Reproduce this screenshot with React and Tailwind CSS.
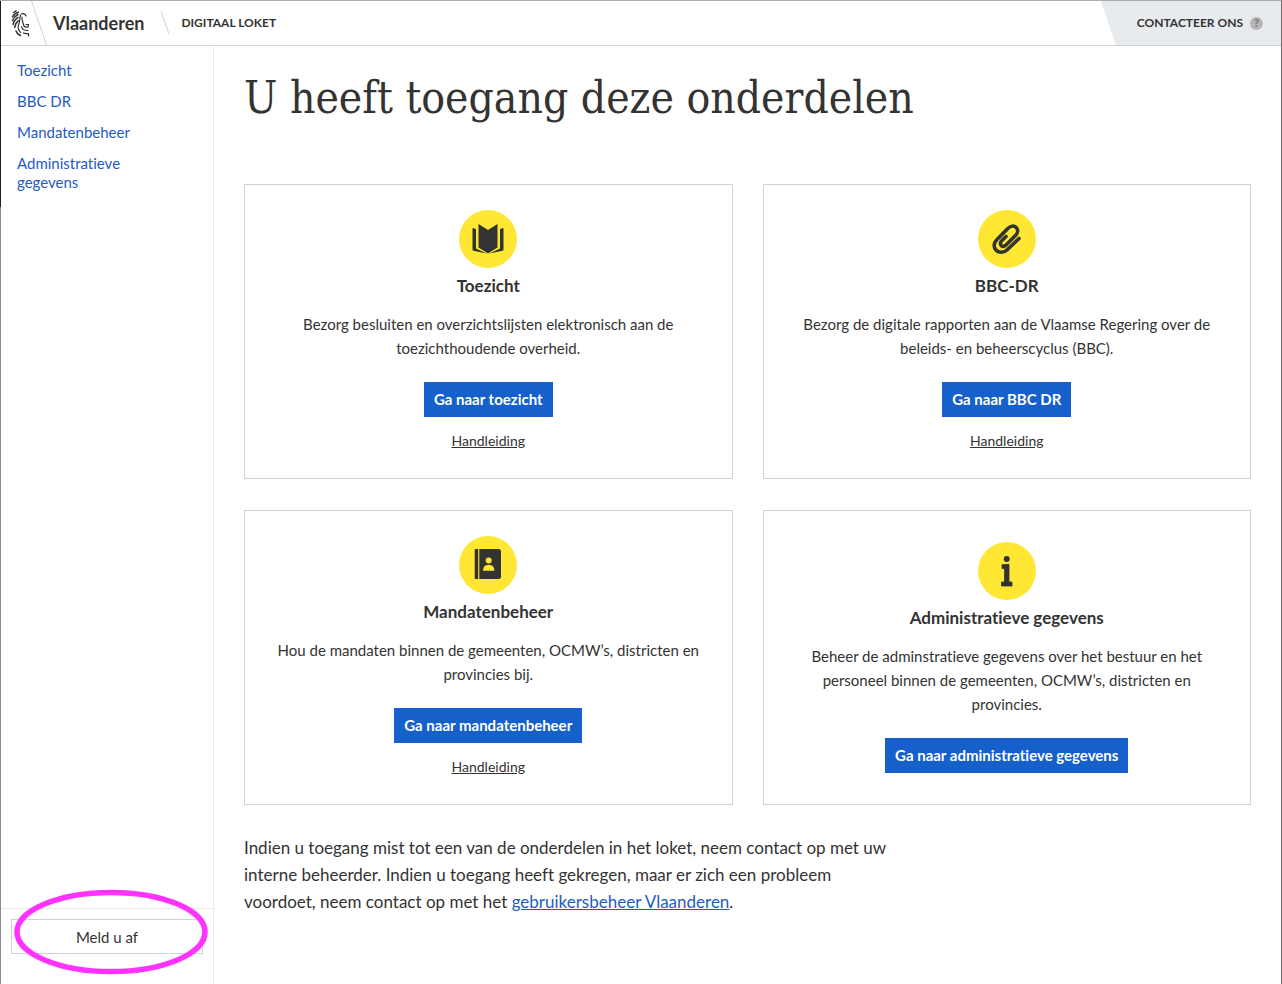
import React from "react";

const modules = [
  {
    title: "Toezicht",
    text: "Bezorg besluiten en overzichtslijsten elektronisch aan de toezichthoudende overheid.",
    action: "Ga naar toezicht",
    manual: true,
    icon: BookIcon,
  },
  {
    title: "BBC-DR",
    text: "Bezorg de digitale rapporten aan de Vlaamse Regering over de beleids- en beheerscyclus (BBC).",
    action: "Ga naar BBC DR",
    manual: true,
    icon: ClipIcon,
  },
  {
    title: "Mandatenbeheer",
    text: "Hou de mandaten binnen de gemeenten, OCMW’s, districten en provincies bij.",
    action: "Ga naar mandatenbeheer",
    manual: true,
    icon: ContactsIcon,
  },
  {
    title: "Administratieve gegevens",
    text: "Beheer de adminstratieve gegevens over het bestuur en het personeel binnen de gemeenten, OCMW’s, districten en provincies.",
    action: "Ga naar administratieve gegevens",
    manual: false,
    icon: InfoIcon,
  },
];

const navigation = ["Toezicht", "BBC DR", "Mandatenbeheer", "Administratieve gegevens"];

function BookIcon() {
  return (
    <svg viewBox="0 0 58 58" className="size-full" fill="#333332" aria-hidden="true">
      <path d="M19.500 14 L29 20 L38.500 14 V37.500 L29 43.500 L19.500 37.500 Z" />
      <path d="M13.500 18 L17 19 V38.500 L27.500 43.500 L14.300 40.800 L13.500 40 Z" />
      <path d="M44.500 18 L41 19 V38.500 L30.500 43.500 L43.700 40.800 L44.500 40 Z" />
    </svg>
  );
}

function ClipIcon() {
  return (
    <svg viewBox="0 0 58 58" className="size-full" fill="none" stroke="#333332" strokeWidth="3.6" strokeLinecap="round" strokeLinejoin="round" aria-hidden="true">
      <path d="M41 28.500 L29.500 39.500 C26 43 21 43.200 18.200 40.300 C15.300 37.400 15.600 33 18.800 29.800 L29.800 18.500 C32.500 15.800 36 15.400 38.200 17.500 C40.400 19.700 40 23 37.500 25.500 L28 35 C26.400 36.600 24.500 36.800 23.200 35.500 C21.900 34.200 22.200 32.300 23.700 30.800 L28 26.500" />
    </svg>
  );
}

function ContactsIcon() {
  return (
    <svg viewBox="0 0 58 58" className="size-full" aria-hidden="true">
      <path d="M16.500 13 H19.200 V43 H16.500 Q15.700 43 15.700 42 V14 Q15.700 13 16.500 13 Z M20.300 13 H39.500 Q42 13 42 15.500 V40.500 Q42 43 39.500 43 H20.300 Z" fill="#333332" />
      <circle cx="29.700" cy="24.500" r="3" fill="#ffe734" />
      <path d="M24 34.700 Q24 28.700 29.700 28.700 Q35.400 28.700 35.400 34.700 Z" fill="#ffe734" />
    </svg>
  );
}

function InfoIcon() {
  return (
    <svg viewBox="0 0 58 58" className="size-full" fill="#333332" aria-hidden="true">
      <circle cx="28.700" cy="17" r="3" />
      <path d="M24 22.800 L31 22.300 V40 H34 V44 H23.500 V40 H26.500 V26.500 H24 Z" stroke="#333332" strokeWidth="0.800" strokeLinejoin="round" />
    </svg>
  );
}

function LionLogo() {
  return (
    <svg viewBox="0 0 20 30" className="h-[30px] w-5" fill="none" stroke="#333332" strokeWidth="1.500" strokeLinecap="round" aria-hidden="true">
      <path d="M2.500 4.500 L5 2.800 M1.500 9 C2.500 7 4 5 7.500 4.200 M1.500 12.500 C2.500 10 4 8 7 6.500 M2 16.500 C2.800 13 4.500 11 7 9.500 M3.800 19.500 C4 17 5 14.500 7.300 12.800 M5 23 C6 25.500 7 26.800 9.500 27.500" />
      <path d="M9.500 7 C8.500 11 9 14 7.500 17 C6.500 19.500 7.500 22 9.500 24.500" strokeWidth="1.200" />
      <path d="M10.500 5.800 C12.500 5.500 14.500 6.500 15 8 M11 9 C10.500 12 12 14 12.500 17 C13 19 14.500 19.500 17 19 L17.500 16.500 H15 M10.500 18.500 C11 21.500 13 22.500 17 22.500 M12.500 25 C14 25.800 16 25.500 17.500 25.500 V28" strokeWidth="1.200" />
    </svg>
  );
}

function ModuleCard({ title, text, action, manual, icon: Icon }) {
  return (
    <article className="flex min-h-[295px] flex-col items-center justify-center border border-[#cbd2da] bg-white px-6 py-6 text-center">
      <div className="size-[58px] rounded-full bg-[#ffe734]">
        <Icon />
      </div>
      <h2 className="mt-2 text-[17px] leading-5 font-bold">{title}</h2>
      <p className="mt-4 max-w-[430px] text-[15px] leading-6">{text}</p>
      <button type="button" className="mt-[22px] h-[35px] bg-[#1660cc] px-[10px] text-[15px] font-bold text-white">
        {action}
      </button>
      {manual && (
        <a href="#handleiding" className="mt-3 text-[14px] leading-6 underline">
          Handleiding
        </a>
      )}
    </article>
  );
}

export default function App() {
  return (
    <div className="flex min-h-screen border-t border-r border-t-[#aeacae] border-r-[#76656c] bg-white font-['Lato','Noto_Sans',sans-serif] text-[#333332] [font-variant-ligatures:none]">
      <div className="w-px shrink-0 bg-[#8b8b8d]">
        <div className="h-[206px] bg-[#17202c]" />
      </div>
      <div className="flex min-w-0 grow flex-col">
        <header className="flex h-[45px] items-stretch border-b border-[#cbd2da]">
          <a href="#home" className="flex items-center pl-[10px]" aria-label="Vlaanderen">
            <LionLogo />
          </a>
          <svg viewBox="0 0 16 44" className="h-11 w-4" aria-hidden="true">
            <path d="M0.500 0 L15.500 44" stroke="#cbd2da" />
          </svg>
          <span className="flex items-center pl-[6px] text-[18px] font-bold">Vlaanderen</span>
          <svg viewBox="0 0 8 24" className="ml-[17px] h-6 w-2 self-center" aria-hidden="true">
            <path d="M0 0 L8 23" stroke="#cbd2da" />
          </svg>
          <span className="flex items-center pl-3 text-[12px] font-bold">DIGITAAL LOKET</span>
          <a href="#contact" className="ml-auto flex items-center gap-[7px] bg-[#e8ebee] pr-[18px] pl-[36px] text-[12px] font-bold [clip-path:polygon(0_0,100%_0,100%_100%,15px_100%)]">
            CONTACTEER ONS
            <span className="flex size-[13px] items-center justify-center rounded-full bg-[#b5b5b5] text-[11px] font-black text-[#777]">?</span>
          </a>
        </header>
        <div className="flex grow items-stretch">
          <aside className="flex w-[213px] shrink-0 flex-col border-r border-[#e8ebee]">
            <nav className="grow px-4 pt-[15px]">
              <ul className="flex flex-col gap-3 text-[15px] leading-[19px] text-[#1f5bc4]">
                {navigation.map((item) => (
                  <li key={item} className="max-w-[130px]">
                    <a href="#onderdeel">{item}</a>
                  </li>
                ))}
              </ul>
            </nav>
            <div className="relative border-t border-[#e8ebee] px-[10px] pt-[10px] pb-[30px]">
              <button type="button" className="h-[35px] w-full border border-[#cbd2da] text-[15px] leading-6">
                Meld u af
              </button>
              <svg viewBox="0 0 196 86" className="pointer-events-none absolute -top-5 left-3 h-[86px] w-[196px]" aria-hidden="true">
                <ellipse cx="98" cy="43" rx="94" ry="39.500" fill="none" stroke="#ff32ff" strokeWidth="5.500" />
              </svg>
            </div>
          </aside>
          <main className="min-w-0 grow px-[30px] pt-[24px]">
            <h1 className="font-['DejaVu_Serif_Condensed','DejaVu_Serif',serif] text-[44px] leading-[56px]">U heeft toegang deze onderdelen</h1>
            <div className="mt-[58px] grid grid-cols-2 gap-x-[30px] gap-y-[31px]">
              {modules.map((module) => (
                <ModuleCard key={module.title} {...module} />
              ))}
            </div>
            <p className="mt-[29px] max-w-[652px] text-[17px] leading-[27px]">
              Indien u toegang mist tot een van de onderdelen in het loket, neem contact op met uw interne beheerder. Indien u
              toegang heeft gekregen, maar er zich een probleem voordoet, neem contact op met het{" "}
              <a href="#gebruikersbeheer" className="text-[#1f5bc4] underline">
                gebruikersbeheer Vlaanderen
              </a>
              .
            </p>
          </main>
        </div>
      </div>
    </div>
  );
}
